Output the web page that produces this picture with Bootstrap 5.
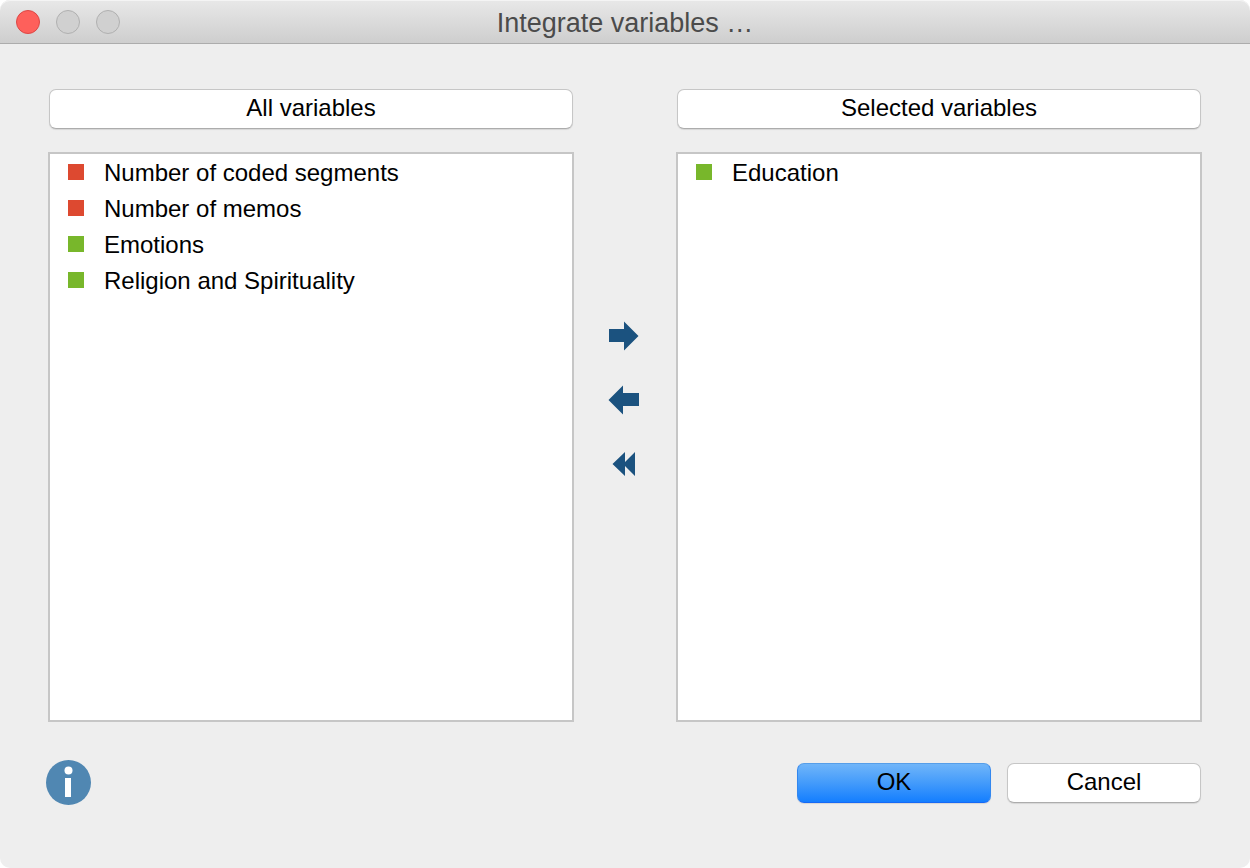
<!DOCTYPE html>
<html lang="en">
<head>
<meta charset="utf-8">
<meta name="viewport" content="width=device-width, initial-scale=1">
<title>Integrate variables …</title>
<link href="https://cdn.jsdelivr.net/npm/bootstrap@5.3.0/dist/css/bootstrap.min.css" rel="stylesheet">
<style>
  body { background: #fff; color: #000; font-family: "Liberation Sans", Arial, sans-serif; font-size: 24px; line-height: 36px; }
  .dialog-window { background: #eee; border-radius: 10px; }
  .title-bar { height: 44px; padding: 0 16px; background: linear-gradient(#e8e8e8, #cecece); border-bottom: 1px solid #acacac; border-radius: 10px 10px 0 0; box-shadow: inset 0 1px #f4f4f4; }
  .title-side { flex: 1 1 0; gap: 16px; }
  .title-text { padding-top: 2px; font-size: 27px; line-height: 42px; color: #4b4b4b; }
  .light { width: 24px; height: 24px; border: 1px solid #b0b0b0; background: #d0d0d0; }
  .light-close { background: #fe605b; border-color: #dd4745; }
  .dialog-body { padding: 45px 48px 0; }
  .pane { flex: 1 1 0; gap: 23px; }
  .mac-btn { height: 40px; padding: 0 8px 2px; font-size: 24px; line-height: 36px; color: #000; background: #fff; border: 1px solid #c6c6c6; border-bottom-color: #acacac; border-radius: 7px; box-shadow: 0 1px 1px #0000001a; }
  .mac-btn:hover { color: #000; background: #f8f8f8; border-color: #bbb; }
  .mac-btn-primary, .mac-btn-primary:hover { background: linear-gradient(#70b5f9, #439bfb 50%, #147eff); border-color: #569ee9 #3287ef #1669f5; }
  .pane-head { margin: 0 1px; }
  .variable-list { background: #fff; border: 2px solid #c6c6c6; padding: 1px 0; }
  .variable-item { padding: 0 18px; gap: 20px; line-height: 36px; background: transparent; color: #000; border: 0; }
  .swatch { width: 16px; height: 16px; margin-bottom: 2px; flex: none; background: #78b72b; }
  .swatch-red { background: #dd4930; }
  .transfer { width: 102px; gap: 32px; padding: 0 2px 12px 0; }
  .icon-btn svg { display: block; }
  .dialog-footer { padding: 38px 49px 63px 46px; gap: 16px; }
  .action-btn { width: 194px; }
</style>
</head>
<body>
<main class="dialog-window min-vh-100 d-flex flex-column" role="dialog" aria-labelledby="dialog-title">
  <header class="title-bar d-flex align-items-center">
    <div class="title-side d-flex">
      <button type="button" class="btn p-0 rounded-circle light light-close" aria-label="Close"></button>
      <button type="button" class="btn p-0 rounded-circle light" aria-label="Minimize"></button>
      <button type="button" class="btn p-0 rounded-circle light" aria-label="Zoom"></button>
    </div>
    <h1 class="title-text mb-0 fw-normal text-nowrap" id="dialog-title">Integrate variables …</h1>
    <div class="title-side"></div>
  </header>

  <div class="dialog-body d-flex flex-grow-1">
    <section class="pane d-flex flex-column">
      <button type="button" class="btn mac-btn pane-head">All variables</button>
      <ul class="list-group list-group-flush variable-list flex-grow-1 mb-0">
        <li class="list-group-item variable-item d-flex align-items-center"><span class="swatch swatch-red"></span>Number of coded segments</li>
        <li class="list-group-item variable-item d-flex align-items-center"><span class="swatch swatch-red"></span>Number of memos</li>
        <li class="list-group-item variable-item d-flex align-items-center"><span class="swatch"></span>Emotions</li>
        <li class="list-group-item variable-item d-flex align-items-center"><span class="swatch"></span>Religion and Spirituality</li>
      </ul>
    </section>

    <div class="transfer d-flex flex-column align-items-center justify-content-center">
      <button type="button" class="btn border-0 p-0 icon-btn" aria-label="Add variable">
        <svg width="32" height="32" viewBox="0 0 32 32" fill="#1b527f"><path d="M1 9h15V1.500l14.500 14.500L16 30.500V22H1z"/></svg>
      </button>
      <button type="button" class="btn border-0 p-0 icon-btn" aria-label="Remove variable">
        <svg width="32" height="32" viewBox="0 0 32 32" fill="#1b527f"><path d="M31 9H15V1.500L.5 16 15 30.500V22h16z"/></svg>
      </button>
      <button type="button" class="btn border-0 p-0 icon-btn" aria-label="Remove all variables">
        <svg width="32" height="32" viewBox="0 0 32 32" fill="#1b527f"><path d="M17 4v10l10-10v24L17 18v10L4.500 16z"/></svg>
      </button>
    </div>

    <section class="pane d-flex flex-column">
      <button type="button" class="btn mac-btn pane-head">Selected variables</button>
      <ul class="list-group list-group-flush variable-list flex-grow-1 mb-0">
        <li class="list-group-item variable-item d-flex align-items-center"><span class="swatch"></span>Education</li>
      </ul>
    </section>
  </div>

  <footer class="dialog-footer d-flex align-items-center">
    <button type="button" class="btn border-0 p-0 icon-btn me-auto" aria-label="Help">
      <svg width="45" height="45" viewBox="0 0 45 45"><circle cx="22.500" cy="22.500" r="22.500" fill="#5087b2"/><circle cx="22.500" cy="10.500" r="4" fill="#fff"/><path d="M19 18h6v19h-6z" fill="#fff"/></svg>
    </button>
    <button type="button" class="btn mac-btn mac-btn-primary action-btn">OK</button>
    <button type="button" class="btn mac-btn action-btn">Cancel</button>
  </footer>
</main>
<script src="https://cdn.jsdelivr.net/npm/bootstrap@5.3.0/dist/js/bootstrap.bundle.min.js"></script>
</body>
</html>
